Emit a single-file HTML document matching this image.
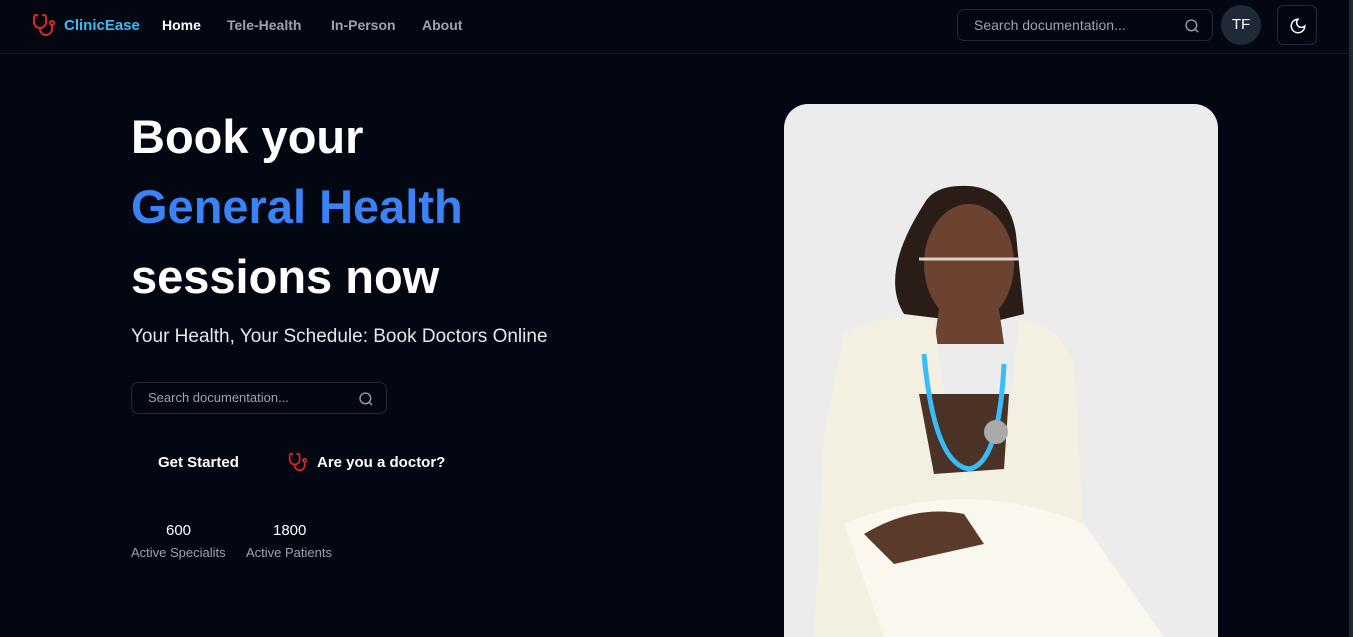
<!DOCTYPE html>
<html><head><meta charset="utf-8"><style>
*{margin:0;padding:0;box-sizing:border-box}
html,body{width:1353px;height:637px;overflow:hidden}
body{background:#030712;font-family:"Liberation Sans",sans-serif;color:#fff;position:relative}
.nav{position:absolute;left:0;top:0;width:1353px;height:54px;border-bottom:1px solid #111827}
.logo{position:absolute;left:32px;top:13px}
.brand{position:absolute;left:64px;top:17px;font-size:15px;font-weight:bold;color:#38bdf8}
.nl{position:absolute;top:17px;font-size:14px;font-weight:bold;color:#9ca3af}
.search{position:absolute;border:1px solid #1f2937;border-radius:7px;color:#9ca3af;font-size:14px}
.search span{position:absolute;left:16px;top:7px}
.search svg{position:absolute;right:12px;top:8px}
.av{position:absolute;left:1221px;top:5px;width:40px;height:40px;border-radius:50%;background:#1f2937;text-align:center;line-height:40px;font-size:15px}
.mode{position:absolute;left:1277px;top:5px;width:40px;height:40px;border:1px solid #1f2937;border-radius:6px}
h1{position:absolute;left:131px;font-size:47px;font-weight:bold;line-height:1}
.sub{position:absolute;left:131px;top:326px;font-size:19px;color:#e5e7eb}
.btn{position:absolute;top:454px;font-size:15px;font-weight:bold}
.num{position:absolute;top:522px;font-size:15px;text-align:center}
.lab{position:absolute;top:545px;font-size:13px;color:#9ca3af}
.photo{position:absolute;left:784px;top:104px;width:434px;height:533px;border-radius:24px 24px 0 0;background:#ececec;overflow:hidden}
.sb{position:absolute;left:1349px;top:0;width:4px;height:637px;background:#1f2937}
</style></head><body>
<div class="nav">
<svg class="logo" width="24" height="24" viewBox="0 0 24 24" fill="none" stroke="#dc2626" stroke-width="2" stroke-linecap="round"><path d="M4.8 2.3A.3.3 0 1 0 5 2H4a2 2 0 0 0-2 2v5a6 6 0 0 0 6 6 6 6 0 0 0 6-6V4a2 2 0 0 0-2-2h-1a.2.2 0 1 0 .3.3"/><path d="M8 15v1a6 6 0 0 0 6 6 6 6 0 0 0 6-6v-4"/><circle cx="20" cy="10" r="2"/></svg>
<div class="brand">ClinicEase</div>
<div class="nl" style="left:162px;color:#fff">Home</div>
<div class="nl" style="left:227px">Tele-Health</div>
<div class="nl" style="left:331px">In-Person</div>
<div class="nl" style="left:422px">About</div>
<div class="search" style="left:957px;top:9px;width:256px;height:32px"><span>Search documentation...</span><svg width="16" height="16" viewBox="0 0 24 24" fill="none" stroke="#9ca3af" stroke-width="2"><circle cx="11" cy="11" r="8"/><path d="m21 21-4.3-4.3"/></svg></div>
<div class="av">TF</div>
<div class="mode"><svg style="position:absolute;left:11px;top:11px" width="18" height="18" viewBox="0 0 24 24" fill="none" stroke="#fff" stroke-width="2"><path d="M12 3a6 6 0 0 0 9 9 9 9 0 1 1-9-9Z"/></svg></div>
</div>
<h1 style="top:113px">Book your</h1>
<h1 style="top:183px;color:#3b82f6">General Health</h1>
<h1 style="top:253px">sessions now</h1>
<div class="sub">Your Health, Your Schedule: Book Doctors Online</div>
<div class="search" style="left:131px;top:382px;width:256px;height:32px;font-size:13px"><span>Search documentation...</span><svg width="16" height="16" viewBox="0 0 24 24" fill="none" stroke="#9ca3af" stroke-width="2"><circle cx="11" cy="11" r="8"/><path d="m21 21-4.3-4.3"/></svg></div>
<div class="btn" style="left:158px">Get Started</div>
<svg style="position:absolute;left:288px;top:452px" width="20" height="20" viewBox="0 0 24 24" fill="none" stroke="#dc2626" stroke-width="2" stroke-linecap="round"><path d="M4.8 2.3A.3.3 0 1 0 5 2H4a2 2 0 0 0-2 2v5a6 6 0 0 0 6 6 6 6 0 0 0 6-6V4a2 2 0 0 0-2-2h-1a.2.2 0 1 0 .3.3"/><path d="M8 15v1a6 6 0 0 0 6 6 6 6 0 0 0 6-6v-4"/><circle cx="20" cy="10" r="2"/></svg>
<div class="btn" style="left:317px">Are you a doctor?</div>
<div class="num" style="left:166px">600</div>
<div class="lab" style="left:131px">Active Specialits</div>
<div class="num" style="left:273px">1800</div>
<div class="lab" style="left:246px">Active Patients</div>
<div class="photo"><svg width="434" height="533" viewBox="0 0 434 533">
<path d="M140 100 Q150 80 185 82 Q225 85 232 130 L240 210 L200 220 L120 210 Q95 170 140 100Z" fill="#2a1d18"/>
<ellipse cx="185" cy="160" rx="45" ry="60" fill="#6b4330"/>
<path d="M135 155 h100" stroke="#d9d3c8" stroke-width="3"/>
<path d="M155 205 L150 240 L220 240 L215 205Z" fill="#6b4330"/>
<path d="M60 230 Q110 205 150 215 L170 360 L220 360 L235 215 Q275 220 290 260 L300 440 L270 533 L30 533 L40 330 Z" fill="#f3efe1"/>
<path d="M135 290 L150 370 L220 365 L225 290Z" fill="#4a3226"/>
<path d="M140 250 Q150 360 185 365 Q215 360 220 260" stroke="#38bdf8" stroke-width="5" fill="none"/>
<circle cx="212" cy="328" r="12" fill="#aaa"/>
<path d="M60 420 Q180 370 300 420 L380 533 L100 533Z" fill="#faf7ee"/>
<path d="M80 430 Q130 400 180 410 L200 440 L110 460Z" fill="#5a3a2a"/>
</svg></div>
<div class="sb"></div>
</body></html>
